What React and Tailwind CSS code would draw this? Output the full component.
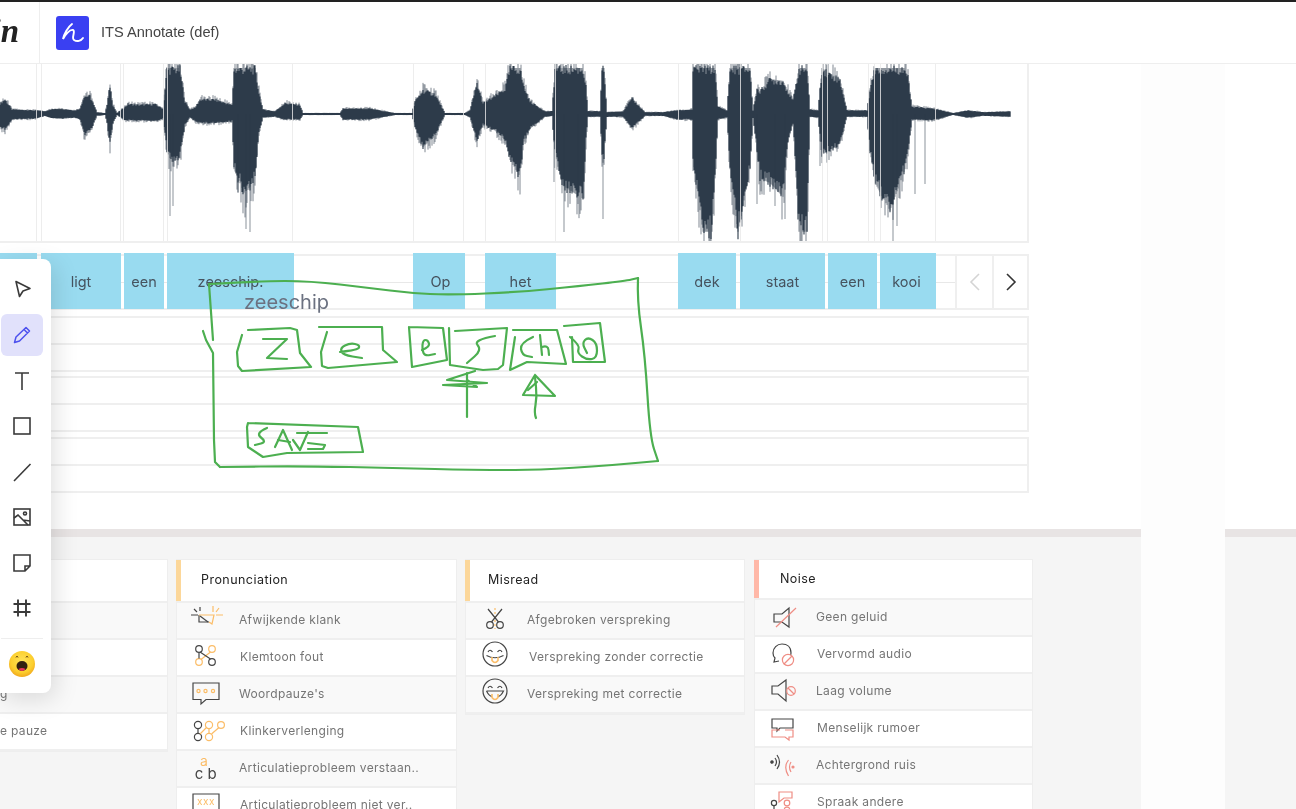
import React from "react";

const env = [[0,12,14],[5,16,17],[12,5,6],[36,4,5],[45,3,2],[50,5,4],[60,6,5],[75,4,4],[80,6,6],[84,20,22],[90,20,20],[97,2,2],[105,1,1],[107,10,10],[110,32,34],[113,10,10],[117,1,1],[125,8,7],[128,11,7],[140,10,7],[155,11,8],[163,6,5],[167,50,42],[172,50,52],[180,50,48],[185,14,12],[190,5,4],[195,7,8],[200,16,10],[215,16,10],[232,10,8],[234,50,60],[245,50,88],[255,50,70],[259,24,20],[263,5,4],[275,3,3],[285,12,6],[300,10,6],[303,1,1],[340,1,1],[343,6,6],[370,6,6],[395,1,1],[412,1,1],[415,14,14],[423,26,36],[435,22,24],[445,1,1],[465,1,1],[470,4,4],[477,34,30],[483,12,12],[495,20,18],[505,28,28],[510,50,50],[520,50,68],[524,30,30],[530,14,16],[545,3,3],[552,3,2],[555,50,45],[563,50,78],[583,50,92],[586,30,30],[588,3,3],[600,3,3],[602,50,46],[604,50,46],[607,2,3],[623,3,3],[632,17,16],[645,2,2],[663,2,2],[677,4,6],[692,5,6],[693,50,50],[703,50,128],[712,50,128],[715,50,70],[718,8,6],[727,4,4],[730,50,60],[738,50,128],[750,50,60],[753,4,4],[757,28,40],[760,25,70],[770,38,75],[783,36,90],[788,25,30],[793,15,10],[799,50,128],[807,50,128],[810,5,3],[818,4,4],[822,50,44],[830,44,40],[840,38,32],[847,4,3],[867,4,3],[870,28,40],[875,50,75],[890,50,105],[905,50,60],[908,40,40],[912,8,6],[933,6,7],[953,1,1],[968,4,4],[983,2,2],[1010,3,3]];
const spikes = [[170,102],[173,92],[238,78],[246,115],[250,118],[554,68],[564,118],[578,90],[603,105],[757,90],[775,92],[785,105],[820,52],[893,130],[897,112],[915,80],[925,70]];
const marks = [36,41,120,123,163,167,292,413,463,485,555,678,740,822,827,868,874,880,935];

function amp(x, i) {
  let k = 0;
  while (k < env.length - 2 && env[k + 1][0] < x) k++;
  const a = env[k], b = env[k + 1];
  const t = Math.min(1, Math.max(0, (x - a[0]) / (b[0] - a[0])));
  return a[i] + (b[i] - a[i]) * t;
}
function noise(x) {
  const s = Math.sin(x * 12.9898) * 43758.5453;
  return s - Math.floor(s);
}
function wavePaths() {
  let dark = "", light = "";
  for (let x = 0; x <= 1010; x += 1) {
    const u = amp(x, 1), d = amp(x, 2);
    const n1 = 0.78 + noise(x) * 0.2, n2 = 0.78 + noise(x + 7.3) * 0.2;
    dark += `M${x} ${50 - Math.max(1, u * n1)}V${50 + Math.max(1, d * n2)}`;
    const k1 = noise(x + 3) > 0.6 ? 1.02 + noise(x + 5) * 0.18 : 0.92;
    const k2 = noise(x + 9) > 0.6 ? 1.02 + noise(x + 11) * 0.18 : 0.92;
    light += `M${x} ${50 - u * k1}V${50 + d * k2}`;
  }
  return { dark, light };
}

function Waveform() {
  const { dark, light } = wavePaths();
  return (
    <svg width="1028" height="178" viewBox="0 0 1028 178" className="block">
      <path d={light} stroke="#2d3b4a" strokeOpacity="0.6" strokeWidth="1" fill="none" />
      <path d={dark} stroke="#2d3b4a" strokeWidth="1.1" fill="none" />
      {spikes.map(([x, d]) => (
        <path key={x} d={`M${x} 50V${50 + d}`} stroke="#2d3b4a" strokeOpacity="0.55" strokeWidth="1" />
      ))}
      {marks.map((x) => (
        <path key={x} d={`M${x + 0.5} 0V178`} stroke="#e9e9e9" strokeOpacity="0.8" strokeWidth="1" />
      ))}
    </svg>
  );
}

const words = [
  { t: "", c: "w-[37px]" },
  { t: "ligt", c: "w-[80px] ml-[4px]" },
  { t: "een", c: "w-[40px] ml-[3px]" },
  { t: "zeeschip.", c: "w-[127px] ml-[3px]" },
  { t: "Op", c: "w-[52px] ml-[119px] pl-[3px]" },
  { t: "het", c: "w-[71px] ml-[20px]" },
  { t: "dek", c: "w-[58px] ml-[122px]" },
  { t: "staat", c: "w-[85px] ml-[4px]" },
  { t: "een", c: "w-[49px] ml-[3px]" },
  { t: "kooi", c: "w-[56px] ml-[3px] pr-[3px]" },
];

function Tier() {
  return (
    <div className="w-[1029px] h-[56px] border-2 border-[#efefef] flex flex-col">
      <div className="flex-1 border-b-2 border-[#efefef]" />
      <div className="flex-1" />
    </div>
  );
}

const D = "#454545";
const O = "#fbbd68";
const R = "#ef8d84";

function Ic({ children }) {
  return (
    <svg width="40" height="36" viewBox="0 0 40 36" fill="none" strokeWidth="1.2" className="block">
      {children}
    </svg>
  );
}

const icons = {
  burst: (
    <Ic>
      <path d="M14 5V9M5 13H12M8 7L11 10" stroke={D} />
      <path d="M27 4V10M33 6L30 10M30 13H37" stroke={O} />
      <path d="M13 13V20H23" stroke={D} />
      <path d="M13 13H28L26 22L23 20" stroke={O} />
      <path d="M14 14L22 20" stroke={D} />
    </Ic>
  ),
  nodes: (
    <Ic>
      <circle cx="13" cy="10" r="3.3" stroke={D} />
      <circle cx="26" cy="10" r="3.3" stroke={O} />
      <circle cx="13" cy="23" r="3.3" stroke={O} />
      <circle cx="26" cy="23" r="3.3" stroke={D} />
      <path d="M13 13.500V19.500" stroke={D} />
      <path d="M24.500 13L15 20.500" stroke={O} />
      <path d="M14 13L24.500 20" stroke={D} />
    </Ic>
  ),
  pause: (
    <Ic>
      <path d="M7 7H33V23.500H20L15 28V23.500H7Z" stroke={D} />
      <circle cx="12.500" cy="15" r="1.600" stroke={O} />
      <circle cx="19.500" cy="15" r="1.600" stroke={O} />
      <circle cx="27" cy="15" r="1.600" stroke={O} />
    </Ic>
  ),
  vowel: (
    <Ic>
      <circle cx="12" cy="12" r="3.600" stroke={D} />
      <circle cx="12" cy="24" r="3.600" stroke={D} />
      <circle cx="23" cy="12" r="3.600" stroke={O} />
      <circle cx="23" cy="24" r="3.600" stroke={O} />
      <circle cx="35" cy="12" r="3.400" stroke={O} />
      <path d="M12 15.500V20.500" stroke={D} />
      <path d="M14 21L21 14M23 15.500V20.500M25.500 21L33 14.500" stroke={O} />
    </Ic>
  ),
  abc: (
    <Ic>
      <text x="18" y="16" textAnchor="middle" fontSize="14" fill={O} fontFamily="Inter, sans-serif" stroke="none">a</text>
      <text x="13" y="29" textAnchor="middle" fontSize="15" fill={D} fontFamily="Inter, sans-serif" stroke="none">c</text>
      <text x="26" y="29" textAnchor="middle" fontSize="15" fill={D} fontFamily="Inter, sans-serif" stroke="none">b</text>
    </Ic>
  ),
  xxx: (
    <Ic>
      <path d="M7 7H33V32H7Z" stroke={D} />
      <text x="20" y="18" textAnchor="middle" fontSize="10" letterSpacing="0.5" fill={O} fontFamily="Inter, sans-serif" stroke="none">xxx</text>
    </Ic>
  ),
  scissors: (
    <Ic>
      <path d="M20 6V27" stroke={O} strokeDasharray="2 2" />
      <circle cx="15" cy="23" r="3.300" stroke={D} />
      <circle cx="25" cy="23" r="3.300" stroke={D} />
      <path d="M13 7L23.500 20M27 7L16.500 20" stroke={D} />
    </Ic>
  ),
  faceA: (
    <Ic>
      <circle cx="20" cy="15" r="12" stroke={D} />
      <path d="M13 13Q15 9.500 17.500 13M22.500 13Q25 9.500 27 13M11.500 16.500Q20 21 28.500 16.500" stroke={D} />
      <path d="M17 18V21.500Q20 25.500 23 21.500V18" stroke={O} strokeWidth="1.600" />
    </Ic>
  ),
  faceB: (
    <Ic>
      <circle cx="20" cy="15" r="12" stroke={D} />
      <path d="M13 12Q15 8.500 17.500 12M22.500 12Q25 8.500 27 12M11.500 15H28.500Q26 20 23 20.500M17 20.500Q14 20 11.500 15" stroke={D} />
      <path d="M17 18V21.500Q20 25.500 23 21.500V18" stroke={O} strokeWidth="1.600" />
    </Ic>
  ),
  mute: (
    <Ic>
      <path d="M10 15H18L25 9V28L18 23H10Z" stroke={D} />
      <path d="M12 28L32 9" stroke={R} />
    </Ic>
  ),
  distort: (
    <Ic>
      <path d="M22 25Q27 21 27 17C27 11 23 8 18 8C13 8 9 12 9 17Q9 20 11 22L10 26L15 25" stroke={D} />
      <circle cx="24" cy="24" r="5.600" stroke={R} fill="#fff" />
      <path d="M20 28L28 20" stroke={R} />
    </Ic>
  ),
  low: (
    <Ic>
      <path d="M8 13H14L22 7V28L14 21H8Z" stroke={D} />
      <circle cx="27" cy="18" r="4.300" stroke={R} />
      <path d="M24 15L30 21" stroke={R} />
    </Ic>
  ),
  human: (
    <Ic>
      <path d="M8 9H29V18H16L13 21V18H8Z" stroke={D} />
      <path d="M16 20H8V27H21L25 30V27H29V20H21" stroke={R} />
    </Ic>
  ),
  bg: (
    <Ic>
      <circle cx="8" cy="15" r="1.200" fill={D} stroke={D} />
      <path d="M11 11Q14 15 11 19M13 8Q18 15 13 22" stroke={D} />
      <circle cx="29" cy="20" r="1" fill={R} stroke={R} />
      <path d="M27 15Q24 20 27 25M24.500 13Q19 20 24.500 29" stroke={R} />
    </Ic>
  ),
  other: (
    <Ic>
      <circle cx="10" cy="19" r="2.600" stroke={D} />
      <path d="M10 22V28" stroke={D} />
      <circle cx="23" cy="19" r="2.800" stroke={R} />
      <path d="M15 8H28V14H20L15 18Z" stroke={R} fill="#fff" />
      <circle cx="23" cy="26" r="2.800" stroke={R} />
    </Ic>
  ),
};

function Row({ icon, text, odd, shift, col }) {
  return (
    <div className={`h-[37px] flex items-center pb-[2px] border-b-2 border-[#efefef] ${odd ? "bg-[#f9f9f9]" : "bg-white"}`}>
      <div className={`${col} pl-[9px] shrink-0`}>{icons[icon]}</div>
      <span className={`text-[12px] tracking-[0.33px] text-[#757575] whitespace-nowrap ${shift}`}>{text}</span>
    </div>
  );
}

function Card({ title, accent, rows, width, head, rowClass, titleClass, col }) {
  return (
    <div className={`${width} shrink-0 border border-[#eeeeee] bg-white`}>
      <div className={`${head} flex items-center bg-white`}>
        <div className={`w-[5px] -ml-px h-full ${accent}`} />
        <span className={`${titleClass} text-[12.5px] tracking-[0.45px] text-[#222]`}>{title}</span>
      </div>
      <div className="border-t-2 border-[#efefef]">
        {rows.map((r, i) => (
          <Row key={r[1]} col={col} icon={r[0]} text={r[1]} shift={i % 2 === 1 ? rowClass : ""} odd={i % 2 === 0} />
        ))}
      </div>
    </div>
  );
}

function smooth(p) {
  let d = `M${p[0][0]} ${p[0][1]}`;
  for (let i = 1; i < p.length - 1; i++) {
    const mx = (p[i][0] + p[i + 1][0]) / 2, my = (p[i][1] + p[i + 1][1]) / 2;
    d += `Q${p[i][0]} ${p[i][1]} ${mx} ${my}`;
  }
  const l = p[p.length - 1];
  return d + `L${l[0]} ${l[1]}`;
}
function poly(p) {
  return "M" + p.map((q) => q.join(" ")).join("L");
}

const polyStrokes = [
  [[209,284],[213,340]],
  [[203,331],[206,340],[213,353],[214,440],[215,462],[220,467]],
  [[263,339],[287,339],[267,358],[287,359]],
  [[475,371],[447,380],[487,383],[443,385],[477,387],[467,380]],
  [[467,417],[467,373]],
  [[535,375],[523,395],[555,396],[535,375]],
  [[528,390],[537,382]],
  [[275,447],[283,430],[292,450]],[[278,440],[290,442]],
  [[293,440],[300,450],[308,432]],
  [[297,433],[327,433]],[[308,443],[325,445],[323,449],[308,449]],
  [[248,330],[290,328],[297,330],[300,353],[311,367],[242,371],[238,366],[237,352],[242,335]],
  [[319,327],[382,327],[383,350],[397,362],[328,368],[322,366],[321,352],[327,332]],
  [[409,327],[443,328],[447,360],[412,367],[409,327]],
  [[449,328],[450,365],[483,370],[498,369],[503,365],[507,328],[455,331]],
  [[515,337],[510,370],[527,362],[566,364],[557,330],[513,330]],
  [[564,326],[600,323],[605,362],[573,362],[572,337]],
  [[248,423],[358,427],[363,452],[287,453],[263,457],[248,447],[247,427],[248,423]],
];
const smoothStrokes = [
  [[209,284],[260,281],[310,281],[370,288],[410,293],[450,295],[520,292],[580,286],[625,281],[638,278]],
  [[638,278],[637,300],[645,355],[650,437],[658,461]],
  [[658,461],[560,470],[470,470],[400,468],[300,466],[220,467]],
  [[340,352],[358,350],[360,345],[350,343],[340,348],[343,355],[362,358]],
  [[422,350],[430,347],[428,340],[423,340],[422,350],[425,356],[435,354]],
  [[495,336],[473,340],[482,350],[467,363]],
  [[533,337],[520,343],[522,355],[532,357]],
  [[540,335],[542,355]],[[542,347],[548,345],[549,355]],
  [[570,337],[580,345],[577,353],[587,360],[597,358],[597,343],[588,337],[582,343],[587,353]],
  [[536,418],[534,413],[537,397],[535,377]],
  [[267,428],[255,433],[267,442],[255,445]],
];

function Toolbar() {
  const item = "h-[45.5px] flex items-center justify-center";
  const s = { fill: "none", stroke: "#3a3a3a", strokeWidth: 1.6 };
  return (
    <div className="absolute left-0 top-[259px] w-[51px] h-[434px] bg-white rounded-r-[8px] shadow-[4px_6px_24px_rgba(0,0,0,0.13)] flex flex-col pt-[7px] z-20">
      <div className="w-[44px] flex flex-col">
        <div className="h-[46px] flex items-center justify-center">
          <svg width="22" height="22" viewBox="0 0 22 22"><path d="M5 3.500L19 10.500L12 13L8.500 18.500Z" {...s} strokeLinejoin="round" /></svg>
        </div>
        <div className="h-[42px] my-[2px] mx-[1px] rounded-[6px] bg-[#e1e1fb] flex items-center justify-center">
          <svg width="22" height="22" viewBox="0 0 22 22"><path d="M3.500 18.500L5 13L15 3.500L18.500 7L8.500 17ZM13 5.500L16.500 9" fill="none" stroke="#4d51ee" strokeWidth="1.500" strokeLinejoin="round" /></svg>
        </div>
        <div className={item}>
          <svg width="22" height="22" viewBox="0 0 22 22"><path d="M4 3H18M11 3V20" {...s} /></svg>
        </div>
        <div className={item}>
          <svg width="22" height="22" viewBox="0 0 22 22"><rect x="3" y="3" width="16" height="16" {...s} /></svg>
        </div>
        <div className={item}>
          <svg width="22" height="22" viewBox="0 0 22 22"><path d="M3 20L19.500 3" {...s} /></svg>
        </div>
        <div className={item}>
          <svg width="22" height="22" viewBox="0 0 22 22"><rect x="3" y="3" width="16" height="16" {...s} /><path d="M3 12L7 9L17 19M12 14L19 15" {...s} /><circle cx="14" cy="7.500" r="1.500" {...s} /></svg>
        </div>
        <div className={item}>
          <svg width="22" height="22" viewBox="0 0 22 22"><path d="M3 3H19V14L14 19H3ZM19 14H14V19" {...s} /></svg>
        </div>
        <div className={item}>
          <svg width="22" height="22" viewBox="0 0 22 22"><path d="M2.500 7H19.500M2.500 15H19.500M7 2.500V19.500M15 2.500V19.500" {...s} strokeWidth="1.900" /></svg>
        </div>
        <div className="h-px mx-[1px] mt-[7px] bg-[#eeeeee]" />
        <div className="h-[50px] flex items-center justify-center">
          <svg width="28" height="28" viewBox="0 0 28 28">
            <defs>
              <radialGradient id="emo" cx="50%" cy="40%" r="60%">
                <stop offset="0%" stopColor="#ffe35a" />
                <stop offset="70%" stopColor="#fccf2e" />
                <stop offset="100%" stopColor="#f1a91f" />
              </radialGradient>
            </defs>
            <circle cx="14" cy="14" r="13" fill="url(#emo)" />
            <path d="M8 7.500L9 6L10 7.500M18 7.500L19 6L20 7.500" fill="none" stroke="#6b4a14" strokeWidth="1" />
            <ellipse cx="14" cy="16" rx="5.500" ry="5" fill="#33200f" />
            <path d="M10.500 19Q14 17 17.500 19Q16 21 14 21Q12 21 10.500 19Z" fill="#e8345a" />
          </svg>
        </div>
      </div>
    </div>
  );
}

export default function App() {
  return (
    <div className="relative w-[1296px] h-[809px] overflow-hidden bg-white font-['Inter',sans-serif] blur-[0.35px]">
      <header className="h-[64px] border-t-2 border-[#222] border-b border-b-[#eeeeee] flex items-center bg-white">
        <div className="w-[40px] h-full border-r border-[#eeeeee] flex items-center justify-end pr-[20px] overflow-hidden">
          <span className="font-['Liberation_Serif',serif] font-bold italic text-[33px] leading-none text-[#222] mb-[2px]">in</span>
        </div>
        <div className="ml-[16px] w-[33px] h-[34px] rounded-[3px] bg-[#3a40f2] flex items-center justify-center">
          <svg width="33" height="34" viewBox="0 0 33 34" fill="none">
            <path d="M16 8C12 11 8 18 7 23C9 19 14 13 17 14C20 15 15 22 18 24C21 26 25 25 27 22" stroke="#ffffff" strokeWidth="1.900" strokeLinecap="round" />
          </svg>
        </div>
        <span className="ml-[12px] mt-[1px] font-['Liberation_Sans',sans-serif] text-[14.6px] text-[#444444]">ITS Annotate (def)</span>
      </header>

      <div className="flex h-[745px]">
        <div className="w-[1141px] shrink-0 flex flex-col">
          <section className="h-[465px] bg-white pb-0">
            <div className="w-[1029px] h-[179px] border-r-2 border-b-2 border-[#efefef] overflow-hidden">
              <Waveform />
            </div>
            <div className="relative mt-[11px] w-[1029px] h-[56px] border-2 border-[#efefef] flex">
              <div className="absolute left-0 right-0 top-[26px] h-px bg-[#e8e8e8]" />
              <div className="relative flex -mt-[3px] -ml-[2px] h-[56px] flex-1">
                {words.map((w, i) => (
                  <div key={i} className={`${w.c} h-full bg-[#99dbf0] flex items-center justify-center text-[14.5px] text-[#46535f] pt-[2px]`}>
                    {w.t}
                  </div>
                ))}
              </div>
              <div className="relative flex bg-white h-full">
                <div className="w-[37px] border-l-2 border-[#efefef] flex items-center justify-center">
                  <svg width="14" height="20" viewBox="0 0 14 20" fill="none"><path d="M11 2L3 10L11 18" stroke="#d4d4d4" strokeWidth="1.600" /></svg>
                </div>
                <div className="w-[35px] border-l-2 border-[#efefef] flex items-center justify-center">
                  <svg width="14" height="20" viewBox="0 0 14 20" fill="none"><path d="M3 2L11 10L3 18" stroke="#333333" strokeWidth="1.600" /></svg>
                </div>
              </div>
            </div>
            <div className="mt-[6px] flex flex-col">
              <Tier />
              <div className="h-[4px]" />
              <Tier />
              <div className="h-[5px]" />
              <Tier />
            </div>
          </section>
          <div className="h-[8px] bg-[#e8e4e4]" />
          <section className="flex-1 bg-[#f5f5f5] pt-[22px] overflow-hidden">
            <div className="flex items-start -ml-[8px]">
              <div className="w-[176px] shrink-0 border border-[#eeeeee] bg-white">
                <div className="h-[41px] bg-white" />
                <div className="border-t-2 border-[#efefef]">
                  <div className="h-[37px] border-b-2 border-[#efefef] bg-[#f9f9f9]" />
                  <div className="h-[37px] border-b-2 border-[#efefef] bg-white" />
                  <div className="h-[37px] pb-[2px] border-b-2 border-[#efefef] bg-[#f9f9f9] flex items-center pl-[7px]">
                    <span className="text-[12px] tracking-[0.33px] text-[#757575]">g</span>
                  </div>
                  <div className="h-[37px] pb-[2px] border-b-2 border-[#efefef] bg-white flex items-center pl-[7px]">
                    <span className="text-[12px] tracking-[0.33px] text-[#757575]">e pauze</span>
                  </div>
                </div>
              </div>
              <div className="ml-[8px]">
                <Card
                  title="Pronunciation"
                  accent="bg-[#fcd79a]"
                  width="w-[281px]"
                  head="h-[41px]"
                  col="w-[62px]"
                  titleClass="ml-[20px]"
                  rowClass="ml-px"
                  rows={[
                    ["burst", "Afwijkende klank"],
                    ["nodes", "Klemtoon fout"],
                    ["pause", "Woordpauze's"],
                    ["vowel", "Klinkerverlenging"],
                    ["abc", "Articulatieprobleem verstaan.."],
                    ["xxx", "Articulatieprobleem niet ver.."],
                  ]}
                />
              </div>
              <div className="ml-[8px]">
                <Card
                  title="Misread"
                  accent="bg-[#fcd79a]"
                  width="w-[280px]"
                  head="h-[41px]"
                  col="w-[61px]"
                  titleClass="ml-[18px]"
                  rowClass="ml-[2px]"
                  rows={[
                    ["scissors", "Afgebroken verspreking"],
                    ["faceA", "Verspreking zonder correctie"],
                    ["faceB", "Verspreking met correctie"],
                  ]}
                />
              </div>
              <div className="ml-[9px]">
                <Card
                  title="Noise"
                  accent="bg-[#ffb8a8]"
                  width="w-[279px]"
                  head="h-[38px]"
                  col="w-[61px]"
                  titleClass="ml-[21px] mt-[1px]"
                  rowClass="ml-px"
                  rows={[
                    ["mute", "Geen geluid"],
                    ["distort", "Vervormd audio"],
                    ["low", "Laag volume"],
                    ["human", "Menselijk rumoer"],
                    ["bg", "Achtergrond ruis"],
                    ["other", "Spraak andere"],
                  ]}
                />
              </div>
            </div>
          </section>
        </div>
        <div className="w-[84px] shrink-0 bg-[#fdfdfd]" />
        <div className="flex-1 flex flex-col">
          <div className="h-[465px] bg-white" />
          <div className="h-[8px] bg-[#e8e4e4]" />
          <div className="flex-1 bg-[#f5f5f5]" />
        </div>
      </div>

      <Toolbar />
      <span className="absolute left-[244px] top-[290px] text-[20px] leading-[24px] text-[#6b7180] z-10">zeeschip</span>
      <svg className="absolute left-0 top-0 z-10 pointer-events-none" width="1296" height="809" viewBox="0 0 1296 809" fill="none">
        <g stroke="#4caf50" strokeWidth="2.200" strokeLinejoin="round" strokeLinecap="round">
          {polyStrokes.map((p, i) => <path key={i} d={poly(p)} />)}
          {smoothStrokes.map((p, i) => <path key={i} d={smooth(p)} />)}
        </g>
      </svg>
    </div>
  );
}
